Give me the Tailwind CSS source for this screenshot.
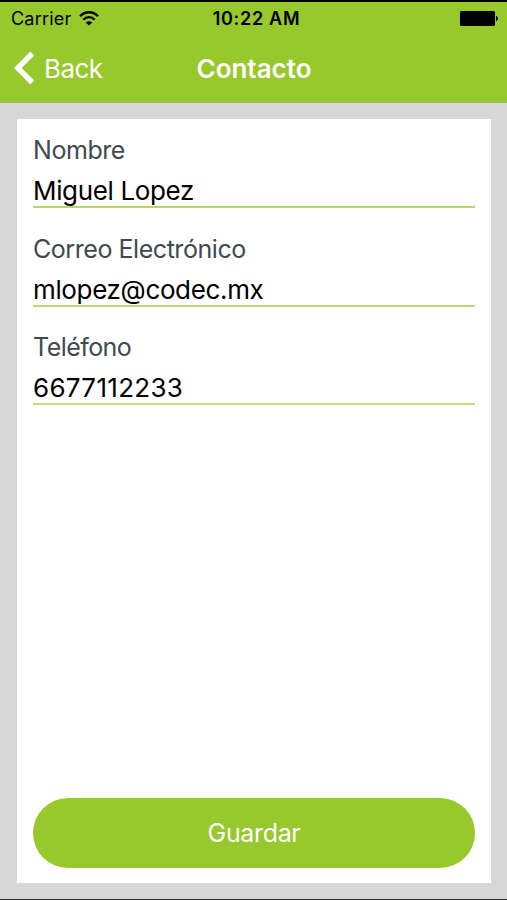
<!DOCTYPE html>
<html lang="es">
<head>
  <meta charset="UTF-8">
  <meta name="viewport" content="width=device-width, initial-scale=1.0">
  <title>Contacto</title>
  <script src="https://cdn.jsdelivr.net/npm/@tailwindcss/browser@4"></script>
</head>
<body class="h-[900px] w-[507px] overflow-hidden bg-[#d7d7d7] font-['Inter',sans-serif] flex flex-col border-t-2 border-b border-t-black border-b-[#333333]">
  <header class="h-[101px] shrink-0 bg-[#97c82c] border-b border-[#a4b976]">
    <!-- status bar -->
    <div class="h-8 grid grid-cols-3 items-center pl-[11px] pr-[9px] text-black">
      <div class="flex items-center gap-2">
        <span class="pt-px text-[18px] leading-8 tracking-[0.2px]">Carrier</span>
        <svg class="w-5 h-[15px]" viewBox="0 0 20 15" fill="none" stroke="#000" stroke-width="2.3">
          <path d="M1 5.300C6-.1 14-.1 19 5.300"/>
          <path d="M4.300 8.700c3.300-3.400 8.100-3.400 11.400 0"/>
          <path d="M10 14.600 6.800 11.400c1.800-1.700 4.600-1.700 6.400 0z" fill="#000" stroke="none"/>
        </svg>
      </div>
      <span class="pt-px pl-1 text-center text-[18px] leading-8 font-semibold whitespace-nowrap tracking-[0.7px]">10:22 AM</span>
      <svg class="justify-self-end w-[38px] h-[15px] mb-px" viewBox="0 0 38 15">
        <rect width="35" height="15" rx="1.5"/>
        <path d="M36 5c1.300.3 2 1.300 2 2.500S37.300 9.700 36 10z"/>
      </svg>
    </div>
    <!-- navigation bar -->
    <div class="h-[68px] grid grid-cols-3 items-center pl-[14px] pr-[13px] text-white">
      <a href="#" class="flex items-center gap-[9px]">
        <svg class="w-[21px] h-[34px]" viewBox="0 0 21 34" fill="none" stroke="#fff" stroke-width="5.4">
          <path d="M18.200 2.500 3.800 17l14.400 14.500"/>
        </svg>
        <span class="pt-0.5 text-[26px] leading-8 tracking-[-0.6px]">Back</span>
      </a>
      <h1 class="pt-0.5 text-center text-[26px] leading-8 font-semibold">Contacto</h1>
    </div>
  </header>

  <main class="grow p-4 pl-[17px]">
    <form class="h-full bg-white flex flex-col justify-between px-4 pt-[14px] pb-[15px]">
      <div class="flex flex-col gap-[23.500px]">
        <div class="h-[75px] border-b-2 border-[#b5d96a]">
          <label class="block text-[25px] leading-[34px] tracking-[-0.45px] text-[#3f4a50]">Nombre</label>
          <div class="text-[26px] leading-[48px] tracking-[-0.35px] text-black">Miguel Lopez</div>
        </div>
        <div class="h-[75px] border-b-2 border-[#b5d96a]">
          <label class="block text-[25px] leading-[34px] tracking-[-0.45px] text-[#3f4a50]">Correo Electrónico</label>
          <div class="text-[26px] leading-[48px] tracking-[-0.35px] text-black">mlopez@codec.mx</div>
        </div>
        <div class="h-[75px] border-b-2 border-[#c3dc84]">
          <label class="block text-[25px] leading-[34px] tracking-[-0.55px] text-[#3f4a50]">Teléfono</label>
          <div class="text-[26px] leading-[48px] tracking-[0.3px] text-black">6677112233</div>
        </div>
      </div>
      <button type="button" class="h-[70px] rounded-full bg-[#97c82c] pt-0.5 text-[25px] tracking-[-0.35px] text-white">Guardar</button>
    </form>
  </main>
</body>
</html>
